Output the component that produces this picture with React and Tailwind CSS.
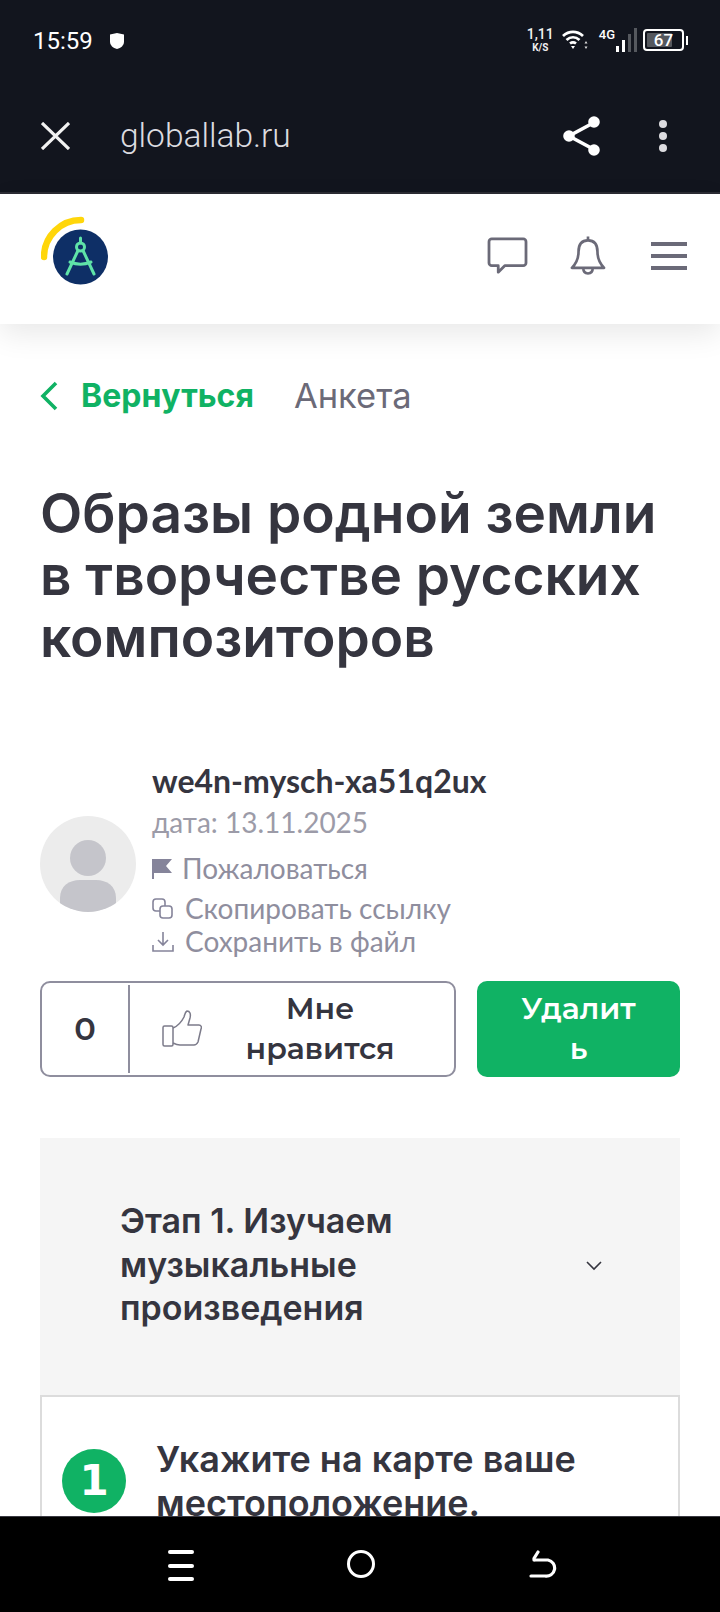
import React from "react";

const StatusBar = () => (
  <div className="h-[80px] flex items-start justify-between pl-[33px] pr-[32px] pt-[25px] text-white">
    <div className="flex items-center gap-[16px]">
      <span className="text-[24px] leading-[32px] font-['Roboto',sans-serif]">15:59</span>
      <svg width="16" height="18" viewBox="0 0 16 18">
        <path d="M1 2.500 8 1l7 1.500v7c0 4-3 6.500-7 7.500-4-1-7-3.500-7-7.500z" fill="#fff" />
      </svg>
    </div>
    <div className="flex items-center gap-[8px] pt-[1px] font-['Roboto',sans-serif]">
      <div className="flex flex-col items-center text-[#f0f0f0] font-medium">
        <span className="text-[14px] leading-[15px]">1,11</span>
        <span className="text-[10px] leading-[11px] font-bold">K/S</span>
      </div>
      <svg width="26" height="24" viewBox="0 0 26 24" fill="none" stroke="#fff" strokeWidth="2.800">
        <path d="M1 8c6-5.500 14-5.500 20 0" />
        <path d="M4.500 12c4-3.500 9-3.500 13 0" />
        <path d="M8 15.500c2-1.500 4-1.500 6 0" />
        <path d="M9 18h4l-2 3z" fill="#fff" stroke="none" />
        <path d="M24 13l-1.500 2.500h3zM24 21l-1.500-2.500h3z" fill="#ddd" stroke="none" />
      </svg>
      <div className="flex items-end h-[28px] ml-[3px] mr-[-2px]">
        <span className="text-[13px] leading-[13px] font-medium self-start mt-[2px] mr-[1px]">4G</span>
        <div className="flex items-end gap-[3px] pb-[2px]">
          <div className="w-[3px] h-[6px] bg-white" />
          <div className="w-[3px] h-[12px] bg-white" />
          <div className="w-[3px] h-[18px] bg-[#55585e]" />
          <div className="w-[3px] h-[24px] bg-[#55585e]" />
        </div>
      </div>
      <div className="flex items-center gap-[2px]">
        <div className="relative w-[41px] h-[22px] rounded-[4px] border-2 border-white p-[2px] flex">
          <div className="w-[25px] h-full bg-[#55585e] rounded-[1px]" />
          <span className="absolute inset-x-0 text-center text-[17px] leading-[14px] font-medium">67</span>
        </div>
        <div className="w-[2px] h-[9px] bg-white" />
      </div>
    </div>
  </div>
);

const BrowserBar = () => (
  <div className="h-[114px] border-b-2 border-[#2b2c34] flex items-center pl-[41px] pr-[53px] text-white">
    <svg width="29" height="28" viewBox="0 0 29 28" stroke="#f2f2f2" strokeWidth="3.200">
      <path d="M1 1l27 26M28 1 1 27" />
    </svg>
    <span className="ml-[50px] text-[33.500px] font-['Roboto',sans-serif] font-light text-[#dcdce0] flex-1">globallab.ru</span>
    <svg width="38" height="40" viewBox="0 0 38 40" fill="#fff" stroke="#fff" strokeWidth="3.600">
      <path d="M32 6 6 20l26 14" fill="none" />
      <circle cx="31" cy="6" r="4" />
      <circle cx="6" cy="20" r="4" />
      <circle cx="31" cy="34" r="4" />
    </svg>
    <div className="ml-[58px] flex flex-col gap-[4px]">
      <div className="w-[8px] h-[8px] rounded-full bg-[#dcdce0]" />
      <div className="w-[8px] h-[8px] rounded-full bg-[#dcdce0]" />
      <div className="w-[8px] h-[8px] rounded-full bg-[#dcdce0]" />
    </div>
  </div>
);

const Logo = () => (
  <svg width="72" height="78" viewBox="0 0 72 78" fill="none">
    <path d="M3 48A37 37 0 0 1 40 11" stroke="#ffd60a" strokeWidth="6.500" strokeLinecap="round" />
    <circle cx="39.500" cy="48" r="27.500" fill="#0e2f66" />
    <g stroke="#5fe3a8" strokeWidth="3" strokeLinecap="round">
      <path d="M39.500 29v5" />
      <circle cx="39.500" cy="38" r="4" />
      <path d="M37 41.500 26 65M42 41.500 53 65" />
      <path d="M29 53c7 3 14 3 21 0" />
    </g>
  </svg>
);

const SiteHeader = () => (
  <div className="h-[130px] bg-white flex items-start shrink-0 pl-[41px] pr-[33px] shadow-[0_10px_28px_rgba(0,0,0,0.09)] relative">
    <div className="pt-[15px]">
      <Logo />
    </div>
    <div className="ml-auto flex items-center pt-[41px]">
      <svg width="41" height="37" viewBox="0 0 44 40" fill="none" stroke="#6b6a78" strokeWidth="3" strokeLinejoin="round">
        <path d="M5 2h34a3 3 0 0 1 3 3v23a3 3 0 0 1-3 3H19l-7 7v-7H5a3 3 0 0 1-3-3V5a3 3 0 0 1 3-3z" />
      </svg>
      <svg width="36" height="41" viewBox="0 0 38 42" fill="none" stroke="#6b6a78" strokeWidth="2.800" strokeLinejoin="round" className="ml-[42px]">
        <path d="M19 5c-7 0-10 5-10 12 0 7-2 12-7 17h34c-5-5-7-10-7-17 0-7-3-12-10-12z" />
        <path d="M19 1v4M14 34c0 4 2 6 5 6s5-2 5-6" />
      </svg>
      <div className="flex flex-col gap-[8px] w-[36px] ml-[45px]">
        <div className="h-[4px] bg-[#6b6a78]" />
        <div className="h-[4px] bg-[#6b6a78]" />
        <div className="h-[4px] bg-[#6b6a78]" />
      </div>
    </div>
  </div>
);

const Avatar = () => (
  <svg width="96" height="96" viewBox="0 0 96 96" className="shrink-0 mt-[8px]">
    <defs>
      <clipPath id="avatar-clip">
        <circle cx="48" cy="48" r="48" />
      </clipPath>
    </defs>
    <circle cx="48" cy="48" r="48" fill="#ececec" />
    <g clipPath="url(#avatar-clip)" fill="#c5c5cb">
      <circle cx="48" cy="42" r="18" />
      <path d="M20 96V82c0-12 9-18 20-18h16c11 0 20 6 20 18v14z" />
    </g>
  </svg>
);

const Author = () => (
  <div className="flex items-center mt-[93px] font-['Lato',sans-serif]">
    <Avatar />
    <div className="ml-[16px] flex flex-col">
      <span className="text-[32px] leading-[40px] font-bold text-[#35353f]">we4n-mysch-xa51q2ux</span>
      <span className="text-[28px] leading-[36px] text-[#9c9ba8] mt-[3px]">дата: 13.11.2025</span>
      <div className="flex items-center h-[34px] mt-[11px] text-[28px] text-[#8f8e9e]">
        <svg width="20" height="22" viewBox="0 0 20 22" className="mr-[10px]">
          <path d="M0 2h20l-6 7 6 7H2v6H0z" fill="#85849a" />
        </svg>
        Пожаловаться
      </div>
      <div className="flex items-center h-[34px] mt-[6px] text-[28px] text-[#8f8e9e]">
        <svg width="22" height="22" viewBox="0 0 22 22" fill="none" stroke="#85849a" strokeWidth="1.600" className="mr-[11px]">
          <rect x="1" y="2" width="12" height="12" rx="3" />
          <rect x="8" y="9" width="12" height="12" rx="3" fill="#fff" />
        </svg>
        Скопировать ссылку
      </div>
      <div className="flex items-center h-[34px] mt-[-1px] text-[28px] text-[#8f8e9e]">
        <svg width="22" height="22" viewBox="0 0 22 22" fill="none" stroke="#85849a" strokeWidth="1.600" className="mr-[11px]">
          <path d="M11 2v13M6 10l5 5 5-5M1 15v6h20v-6" />
        </svg>
        Сохранить в файл
      </div>
    </div>
  </div>
);

const Actions = () => (
  <div className="flex gap-[21px] mt-[23px] font-['Montserrat','Inter',sans-serif]">
    <div className="w-[416px] h-[96px] rounded-[10px] border-2 border-[#8f8e9e] flex items-stretch py-[2px]">
      <div className="w-[88px] border-r-2 border-[#8f8e9e] flex items-center justify-center text-[32px] font-semibold text-[#35353f]">0</div>
      <div className="flex-1 flex items-center pl-[32px]">
        <svg width="40" height="38" viewBox="0 0 40 38" fill="none" stroke="#7c7b8a" strokeWidth="1.500" strokeLinejoin="round">
          <rect x="1" y="16" width="10" height="20" rx="1.500" />
          <path d="M11 18c5-2 9-7 11-11 1-3 1-5 3-6 3 0 4 3 3 7l-2 7h11c2 0 3 2 2 4l-3 13c-1 2-2 3-4 3H18c-3 0-5-1-7-2" />
        </svg>
        <span className="flex-1 text-center text-[30px] leading-[40px] font-semibold text-[#35353f] pr-[16px]">Мне<br />нравится</span>
      </div>
    </div>
    <div className="w-[203px] h-[96px] rounded-[10px] bg-[#10b264] text-white text-[30px] leading-[40px] font-semibold flex items-center justify-center text-center">
      <span>Удалит<br />ь</span>
    </div>
  </div>
);

const Stage = () => (
  <div className="mt-[61px] bg-[#f5f5f5] pt-[61px]">
    <div className="flex items-center pl-[80px] pr-[78px]">
      <span className="flex-1 text-[34px] leading-[43.500px] font-semibold text-[#35353f]">Этап 1. Изучаем<br />музыкальные<br />произведения</span>
      <svg width="16" height="10" viewBox="0 0 16 10" fill="none" stroke="#35353f" strokeWidth="1.600" className="mt-[3px]">
        <path d="M1 1l7 7 7-7" />
      </svg>
    </div>
    <div className="mt-[65px] border-2 border-[#dcdcdc] bg-white pt-[40px] pl-[20px] flex h-[300px]">
      <div className="w-[64px] h-[64px] rounded-full bg-[#10b264] text-white text-[42px] font-bold font-['DejaVu_Sans',sans-serif] flex items-center justify-center mt-[12px] shrink-0">1</div>
      <span className="ml-[30px] text-[36px] leading-[44px] font-semibold text-[#35353f]">Укажите на карте ваше<br />местоположение.</span>
    </div>
  </div>
);

const NavBar = () => (
  <div className="h-[96px] shrink-0 bg-black border-t border-[#3a3a42] flex items-start pt-[33px] pl-[168px] relative">
    <div className="flex flex-col gap-[9.500px] w-[26px]">
      <div className="h-[4px] rounded-full bg-white" />
      <div className="h-[4px] rounded-full bg-white" />
      <div className="h-[4px] rounded-full bg-white" />
    </div>
    <div className="ml-[153px] w-[28px] h-[28px] rounded-full border-[3.500px] border-white" />
    <svg width="28" height="28" viewBox="0 0 28 28" fill="none" stroke="#fff" strokeWidth="3.200" strokeLinecap="round" className="ml-[154px]">
      <path d="M2 26h14a8 8 0 0 0 3-16H6" />
      <path d="M9 2 5 8.500l0 1.500" />
    </svg>
  </div>
);

export default function App() {
  return (
    <div className="w-[720px] h-[1612px] flex flex-col overflow-hidden bg-white font-['Inter',sans-serif]">
      <div className="h-[194px] shrink-0 bg-[#12151e]">
        <StatusBar />
        <BrowserBar />
      </div>
      <SiteHeader />
      <div className="flex-1 min-h-0 overflow-hidden px-[40px]">
        <div className="flex items-center mt-[48px] h-[48px]">
          <svg width="18" height="30" viewBox="0 0 18 30" fill="none" stroke="#10b264" strokeWidth="3.600">
            <path d="M16 2 3 15l13 13" />
          </svg>
          <span className="ml-[23px] text-[32px] font-bold text-[#10b264]">Вернуться</span>
          <span className="ml-[40px] text-[34.500px] text-[#6b6a78] font-normal">Анкета</span>
        </div>
        <h1 className="mt-[62px] text-[55px] leading-[62px] font-semibold text-[#35353f]">Образы родной земли<br />в творчестве русских<br />композиторов</h1>
        <Author />
        <Actions />
        <Stage />
      </div>
      <NavBar />
    </div>
  );
}
